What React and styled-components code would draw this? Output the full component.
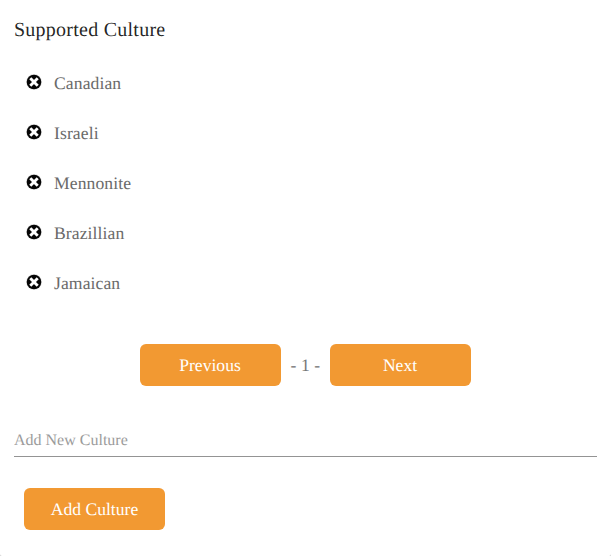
import React from 'react';
import styled, { createGlobalStyle } from 'styled-components';

const GlobalStyle = createGlobalStyle`
  *, *::before, *::after { box-sizing: border-box; }
  body {
    margin: 0;
    background: #ccc;
    font-family: "Liberation Serif", "Times New Roman", serif;
    text-rendering: geometricPrecision;
  }
`;

const Panel = styled.main`
  height: 556px;
  padding: 16px 14px 0;
  overflow: hidden;
  border-radius: 0 0 2px 2px;
  background: #fff;
`;

const Title = styled.h1`
  margin: 0;
  height: 42px;
  font-size: 20px;
  line-height: 28px;
  font-weight: 400;
  letter-spacing: 0.25px;
  color: rgba(0, 0, 0, 0.87);
`;

const List = styled.ul`
  margin: 0;
  padding: 0;
  list-style: none;
`;

const Item = styled.li`
  display: flex;
  align-items: center;
  gap: 12px;
  height: 50px;
  padding-left: 12px;
  font-size: 17.6px;
  letter-spacing: 0.1px;
  color: #6a6a6a;
`;

const CultureName = styled.span`
  padding-top: 1px;
`;

const RemoveButton = styled.button`
  display: flex;
  width: 16px;
  height: 16px;
  padding: 0;
  margin-top: -2px;
  border: 0;
  background: none;
`;

const Pager = styled.nav`
  display: grid;
  grid-template-columns: 141px 29px 141px;
  justify-content: center;
  align-items: center;
  column-gap: 10px;
  width: 582px;
  margin-top: 36px;
  font-size: 17.6px;
  letter-spacing: 0.1px;
  color: #777;
`;

const PageNumber = styled.span`
  padding-top: 1px;
  white-space: nowrap;
`;

const Button = styled.button`
  width: 141px;
  height: 42px;
  padding: 1px 0 0;
  border: 0;
  border-radius: 6px;
  background: #f29932;
  color: #fff;
  font: inherit;
  font-size: 17.6px;
  text-rendering: inherit;
`;

const Form = styled.form`
  display: flex;
  flex-direction: column;
  align-items: flex-start;
  margin-top: 38px;
`;

const Input = styled.input`
  width: 583px;
  height: 33px;
  padding: 2px 0 0;
  border: 0;
  border-bottom: 1px solid #949494;
  font: inherit;
  font-size: 16px;
  text-rendering: inherit;
  outline: none;
  &::placeholder { color: #9b9b9b; opacity: 1; }
`;

const SubmitButton = styled(Button)`
  margin: 31px 0 0 10px;
`;

const RemoveIcon = () => (
  <svg width="16" height="16" viewBox="0 0 16 16">
    <circle cx="8" cy="8" r="7.9" fill="#ddd" />
    <circle cx="8" cy="8" r="7.3" fill="#050505" />
    <path d="M5.3 5.3l5.4 5.4M10.7 5.3l-5.4 5.4" stroke="#fff" strokeWidth="2.9" strokeLinecap="square" />
  </svg>
);

const cultures = ['Canadian', 'Israeli', 'Mennonite', 'Brazillian', 'Jamaican'];

export default function App() {
  return (
    <>
      <GlobalStyle />
      <Panel>
        <Title>Supported Culture</Title>
        <List>
          {cultures.map((name) => (
            <Item key={name}>
              <RemoveButton aria-label={`Remove ${name}`}><RemoveIcon /></RemoveButton>
              <CultureName>{name}</CultureName>
            </Item>
          ))}
        </List>
        <Pager>
          <Button>Previous</Button>
          <PageNumber>- 1 -</PageNumber>
          <Button>Next</Button>
        </Pager>
        <Form>
          <Input placeholder="Add New Culture" />
          <SubmitButton type="button">Add Culture</SubmitButton>
        </Form>
      </Panel>
    </>
  );
}
